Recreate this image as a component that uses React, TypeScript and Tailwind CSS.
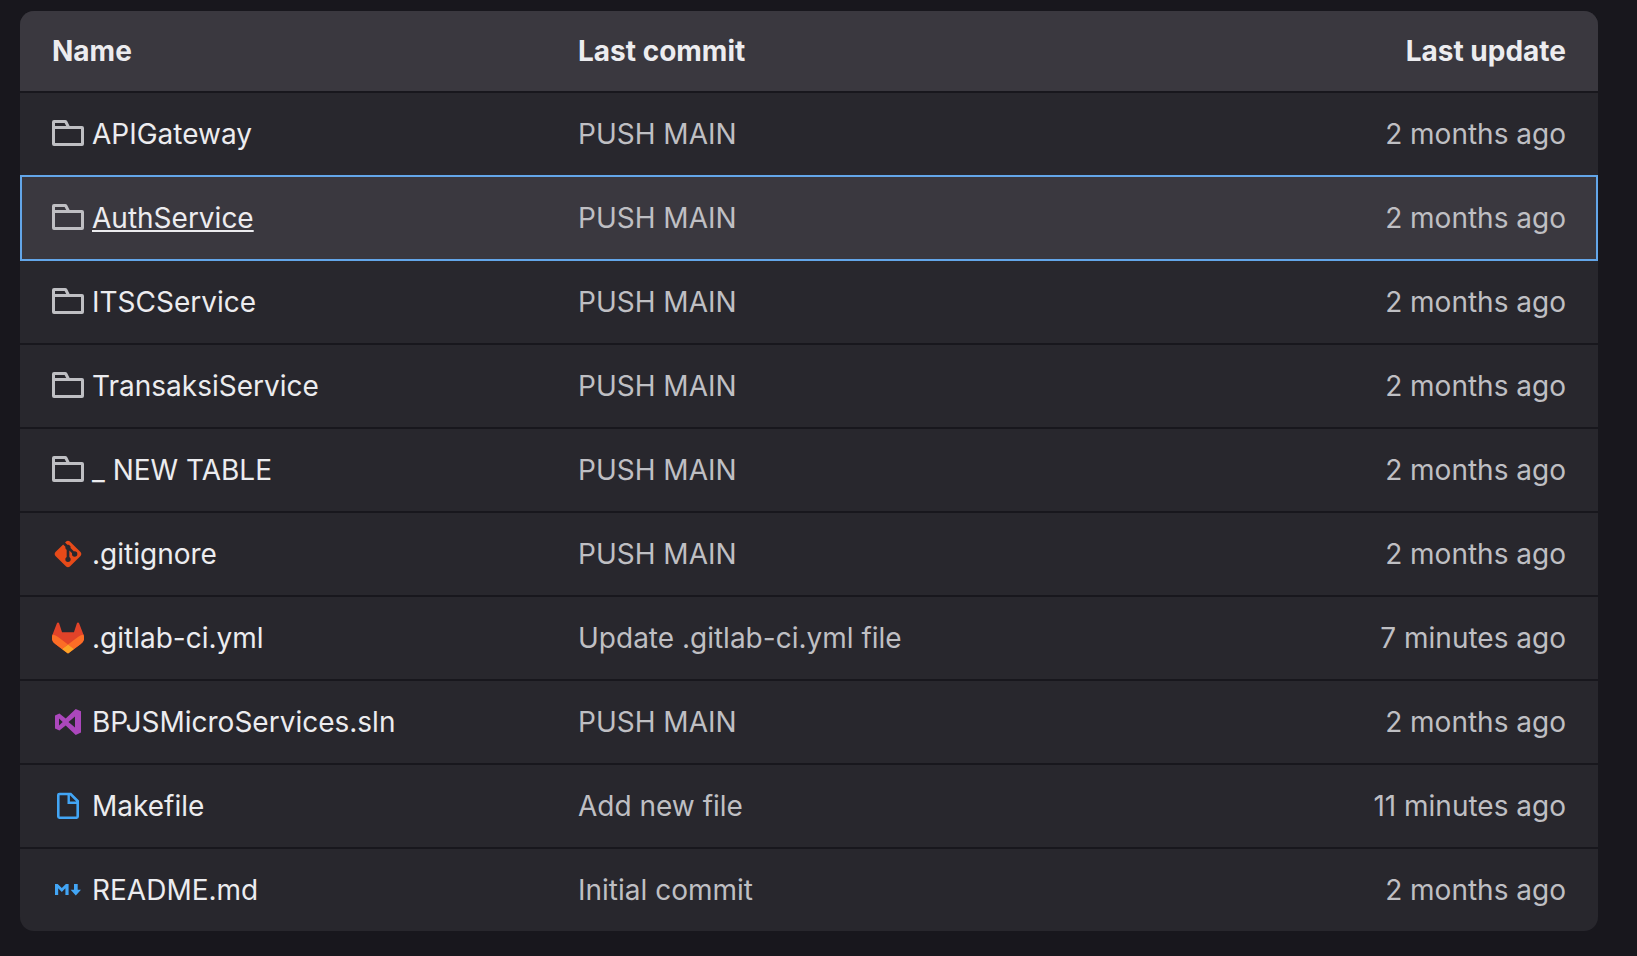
import type { ReactNode } from 'react';

type FileType = 'folder' | 'git' | 'gitlab' | 'visualstudio' | 'makefile' | 'markdown';

const files: { name: string; type: FileType; commit: string; updated: string }[] = [
  { name: 'APIGateway', type: 'folder', commit: 'PUSH MAIN', updated: '2 months ago' },
  { name: 'AuthService', type: 'folder', commit: 'PUSH MAIN', updated: '2 months ago' },
  { name: 'ITSCService', type: 'folder', commit: 'PUSH MAIN', updated: '2 months ago' },
  { name: 'TransaksiService', type: 'folder', commit: 'PUSH MAIN', updated: '2 months ago' },
  { name: '_ NEW TABLE', type: 'folder', commit: 'PUSH MAIN', updated: '2 months ago' },
  { name: '.gitignore', type: 'git', commit: 'PUSH MAIN', updated: '2 months ago' },
  { name: '.gitlab-ci.yml', type: 'gitlab', commit: 'Update .gitlab-ci.yml file', updated: '7 minutes ago' },
  { name: 'BPJSMicroServices.sln', type: 'visualstudio', commit: 'PUSH MAIN', updated: '2 months ago' },
  { name: 'Makefile', type: 'makefile', commit: 'Add new file', updated: '11 minutes ago' },
  { name: 'README.md', type: 'markdown', commit: 'Initial commit', updated: '2 months ago' },
];

const activeFile = 'AuthService';

const icons: Record<FileType, ReactNode> = {
  folder: (
    <path
      fill="#bfbfc3"
      fillRule="evenodd"
      d="M2 2h11.2c.8 0 1.5.4 1.900 1.100L17.600 8H30a2 2 0 0 1 2 2v16a2 2 0 0 1-2 2H2a2 2 0 0 1-2-2V4a2 2 0 0 1 2-2Zm1 3v3h11.200l-1.600-3H3Zm0 6v14h26V11H3Z"
    />
  ),
  git: (
    <g transform="scale(1.3333)">
      <path
        fill="#e64a19"
        d="M2.6 10.59 8.38 4.8l1.69 1.7c-.24.85.15 1.78.93 2.23v5.54c-.6.34-1 .99-1 1.73a2 2 0 0 0 2 2 2 2 0 0 0 2-2c0-.74-.4-1.39-1-1.73V9.41l2.07 2.09c-.07.15-.07.32-.07.5a2 2 0 0 0 2 2 2 2 0 0 0 2-2 2 2 0 0 0-2-2c-.18 0-.35 0-.5.07L13.93 7.5a1.98 1.98 0 0 0-1.15-2.34c-.43-.16-.88-.2-1.28-.09L9.8 3.38l.79-.78c.78-.79 2.04-.79 2.82 0l7.99 7.99c.79.78.79 2.04 0 2.82l-7.99 7.99c-.78.79-2.04.79-2.82 0L2.6 13.41c-.79-.78-.79-2.04 0-2.82Z"
      />
    </g>
  ),
  gitlab: (
    <g transform="translate(0 .5) scale(1.285)">
      <path
        fill="#e24329"
        d="m24.507 9.5-.034-.09L21.082.562a.896.896 0 0 0-1.694.091l-2.29 7.01H7.825L5.535.653a.898.898 0 0 0-1.694-.09L.451 9.411.416 9.5a6.297 6.297 0 0 0 2.09 7.278l.012.01.03.022 5.16 3.867 2.56 1.935 1.554 1.176a1.051 1.051 0 0 0 1.268 0l1.555-1.176 2.56-1.935 5.197-3.89.014-.01A6.297 6.297 0 0 0 24.507 9.5Z"
      />
      <path
        fill="#fc6d26"
        d="m24.507 9.5-.034-.09a11.44 11.44 0 0 0-4.56 2.051l-7.447 5.632 4.742 3.584 5.197-3.89.014-.01A6.297 6.297 0 0 0 24.507 9.5Z"
      />
      <path
        fill="#fca326"
        d="m7.707 20.677 2.56 1.935 1.555 1.176a1.051 1.051 0 0 0 1.268 0l1.555-1.176 2.56-1.935-4.743-3.584-4.755 3.584Z"
      />
      <path
        fill="#fc6d26"
        d="M5.01 11.461a11.43 11.43 0 0 0-4.56-2.05L.416 9.5a6.297 6.297 0 0 0 2.09 7.278l.012.01.03.022 5.16 3.867 4.745-3.584-7.444-5.632Z"
      />
    </g>
  ),
  visualstudio: (
    <path
      fill="#ab47bc"
      fillRule="evenodd"
      d="M23.7 3 29 5.3v21.3L23.7 29l-10-9.4-6.3 4.900L3 22.500V9.500l4.400-2 6.300 4.900ZM23 10.500 16.500 16l6.500 5.500Zm-16 2v7l3.700-3.500Z"
    />
  ),
  makefile: (
    <path
      fill="#42a5f5"
      fillRule="evenodd"
      d="M7.400 2.700h11.800L27 10.500v16.100a2.400 2.400 0 0 1-2.400 2.400H7.400A2.400 2.400 0 0 1 5 26.600V5.100a2.400 2.400 0 0 1 2.400-2.400Zm.2 2.600v21.100h16.800V14H15.500V5.300Zm10.300 0v6.300h6.300Z"
    />
  ),
  markdown: (
    <path
      fill="#42a5f5"
      d="M3 21V10h2.700l4.100 4.100 4.100-4.100h2.700v11h-3.200v-6.700l-3.600 3.600-3.600-3.600V21Zm19-11h3.700v5.700H29l-5.200 5.700-5.200-5.700H22Z"
    />
  ),
};

function FileIcon({ type }: { type: FileType }) {
  return (
    <svg className="h-8 w-8 shrink-0" viewBox="0 0 32 32" aria-hidden="true">
      {icons[type]}
    </svg>
  );
}

export default function App() {
  return (
    <main className="min-h-screen bg-[#18171d] pt-[11px] pr-[39px] pb-6 pl-5 font-['Inter',sans-serif] text-[28px] leading-10 text-[#ececef]">
      <table className="w-full table-fixed border-separate border-spacing-0 overflow-hidden rounded-[14px] bg-[#28272d]">
        <thead className="bg-[#3a383f]">
          <tr>
            <th scope="col" className="border-b-2 border-[#18171d] px-8 py-5 text-left font-bold">Name</th>
            <th scope="col" className="border-b-2 border-[#18171d] px-8 py-5 text-left font-bold">Last commit</th>
            <th scope="col" className="border-b-2 border-[#18171d] px-8 py-5 text-right font-bold">Last update</th>
          </tr>
        </thead>
        <tbody>
          {files.map((file) => {
            const active = file.name === activeFile;
            return (
              <tr key={file.name} className={`group ${active ? 'relative bg-[#3a383f]' : ''}`}>
                {/* The ring hangs off the first cell but spans the whole row, which is the positioned parent */}
                <td
                  className={`border-b-2 border-[#18171d] px-8 py-[21px] group-last:border-b-0 ${
                    active
                      ? 'after:pointer-events-none after:absolute after:inset-x-0 after:-top-0.5 after:bottom-0 after:border-2 after:border-[#63a6e9]'
                      : ''
                  }`}
                >
                  <a href="#" className="flex items-center gap-2 whitespace-nowrap">
                    <FileIcon type={file.type} />
                    <span className={active ? 'underline decoration-2 underline-offset-2' : ''}>{file.name}</span>
                  </a>
                </td>
                <td className="truncate border-b-2 border-[#18171d] px-8 py-[21px] text-[#bfbfc3] group-last:border-b-0">
                  <a href="#">{file.commit}</a>
                </td>
                <td className="border-b-2 border-[#18171d] px-8 py-[21px] text-right whitespace-nowrap text-[#bfbfc3] group-last:border-b-0">
                  <time>{file.updated}</time>
                </td>
              </tr>
            );
          })}
        </tbody>
      </table>
    </main>
  );
}
